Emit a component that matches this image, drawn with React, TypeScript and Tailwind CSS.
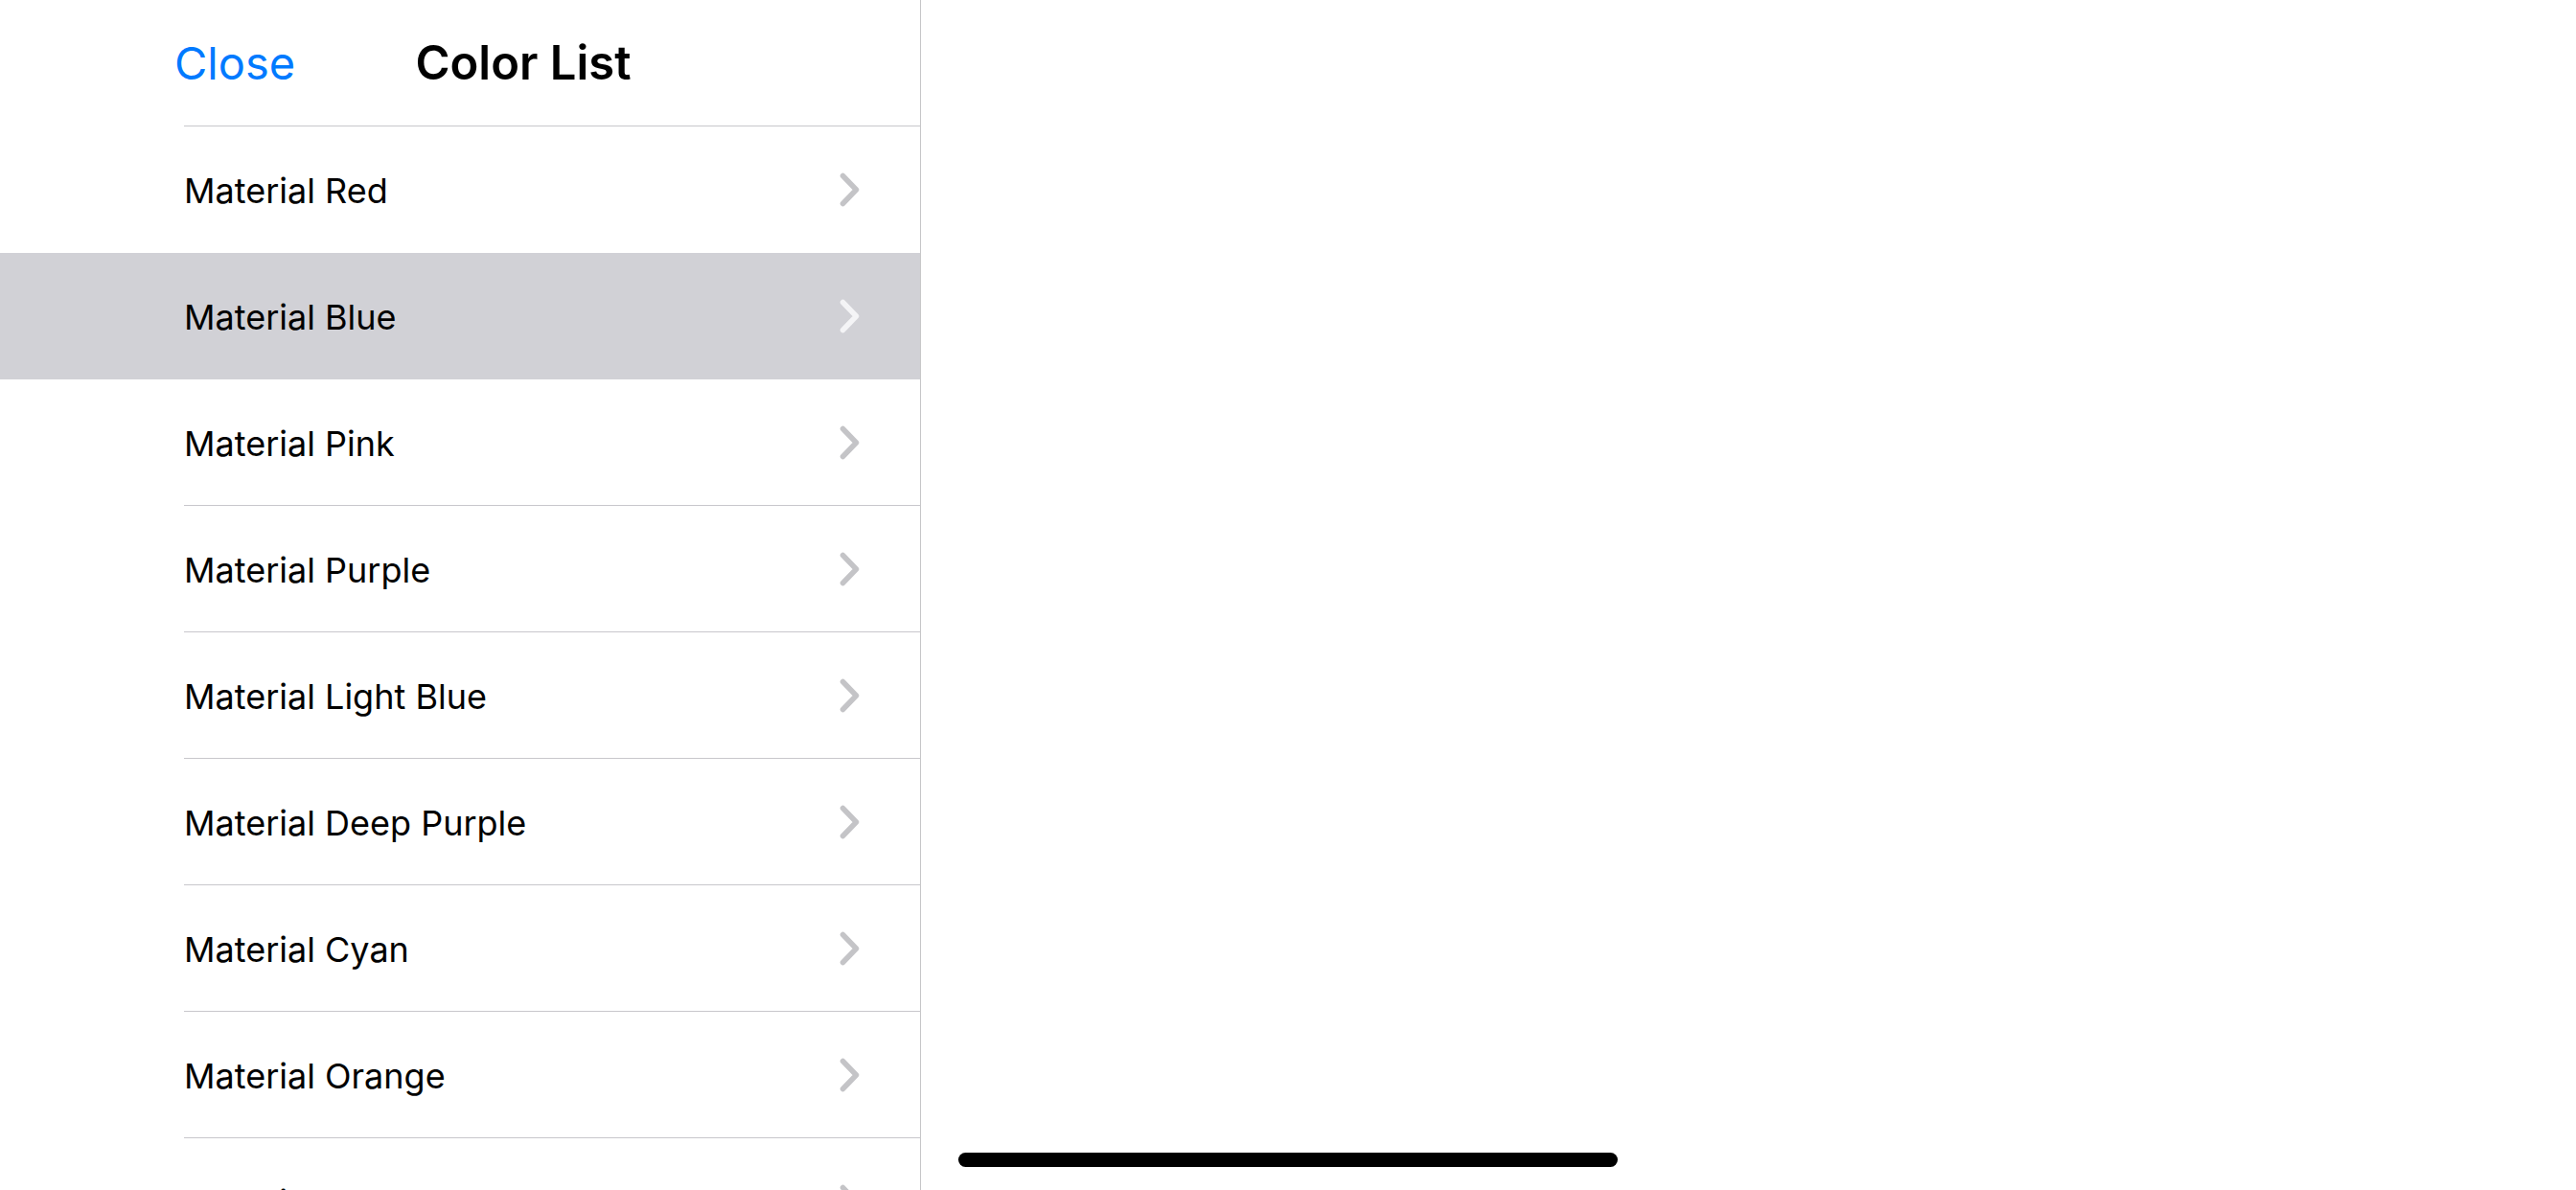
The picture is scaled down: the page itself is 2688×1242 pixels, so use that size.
import React from 'react';

const colors = [
  'Material Red',
  'Material Blue',
  'Material Pink',
  'Material Purple',
  'Material Light Blue',
  'Material Deep Purple',
  'Material Cyan',
  'Material Orange',
  'Material Yellow',
];

const selectedIndex = 1;

function Chevron({ selected }: { selected: boolean }) {
  return (
    <svg width="21" height="36" viewBox="0 0 21 36" fill="none" className="shrink-0">
      <path
        d="M3.5 3.5 L17.5 18 L3.5 32.5"
        stroke={selected ? '#f4f4f6' : '#c4c4c7'}
        strokeWidth="5.5"
        strokeLinecap="round"
        strokeLinejoin="round"
      />
    </svg>
  );
}

export default function App() {
  return (
    <div
      className="relative flex h-[1242px] w-[2688px] overflow-hidden bg-white text-black"
      style={{ fontFamily: 'Inter, "Noto Sans", sans-serif' }}
    >
      {/* master list */}
      <div className="flex h-full w-[961px] shrink-0 flex-col border-r border-[#c6c6c8]">
        <div className="flex h-[132px] shrink-0 flex-col">
          <div className="grid flex-1 grid-cols-[1fr_auto_1fr] items-center pl-[132px]">
            <span className="pl-[50px] text-[47px] leading-none text-[#007aff]">Close</span>
            <span className="text-[49px] leading-none font-semibold">Color List</span>
            <span />
          </div>
          <div className="ml-[192px] h-px bg-[#c8c7cc]" />
        </div>

        {colors.map((name, i) => {
          const selected = i === selectedIndex;
          const hideLine = selected || i + 1 === selectedIndex;
          return (
            <div
              key={name}
              className={`flex h-[132px] shrink-0 ${selected ? 'bg-[#d1d1d6]' : ''}`}
            >
              <div
                className={`ml-[192px] flex flex-1 items-center justify-between border-b pr-[63px] ${
                  hideLine ? 'border-transparent' : 'border-[#c8c7cc]'
                }`}
              >
                <span className="pt-[3px] text-[36px] leading-none">{name}</span>
                <Chevron selected={selected} />
              </div>
            </div>
          );
        })}
      </div>

      {/* detail area */}
      <div className="flex-1" />

      {/* home indicator */}
      <div className="absolute bottom-[24px] left-[1000px] h-[15px] w-[688px] rounded-full bg-black" />
    </div>
  );
}
